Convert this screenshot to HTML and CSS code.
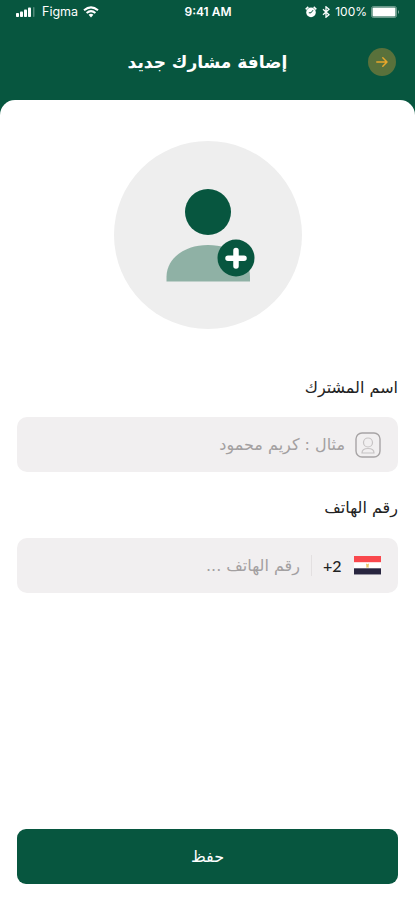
FILE: index.html
```html
<!DOCTYPE html>
<html lang="ar" dir="rtl">
<head>
<meta charset="utf-8">
<meta name="viewport" content="width=device-width">
<title>إضافة مشارك جديد</title>
<link rel="stylesheet" href="styles.css">
</head>
<body>
<div class="screen">
  <div class="status" dir="ltr">
    <div class="status-left">
      <svg width="19" height="10" viewBox="0 0 19 10" fill="#fff"><rect y="6" width="3" height="4" rx=".8"/><rect x="4" y="4.5" width="3" height="5.5" rx=".8"/><rect x="8" y="2.5" width="3" height="7.5" rx=".8"/><rect x="12" y=".5" width="3" height="9.5" rx=".8"/><rect x="17" y="0" width="1.5" height="10" rx=".7" opacity=".3"/></svg>
      <span class="carrier">Figma</span>
      <svg width="16" height="12" viewBox="0 0 16 12" fill="none" stroke="#fff" stroke-width="2"><path d="M1 4.3Q8-1.6 15 4.3"/><path d="M3.6 7Q8 3.3 12.4 7"/><path d="M5.6 8.8Q8 6.9 10.4 8.8L8 11.4Z" fill="#fff" stroke="none"/></svg>
    </div>
    <span class="time">9:41 AM</span>
    <div class="status-right">
      <svg width="12" height="12" viewBox="0 0 12 12" fill="#fff"><circle cx="6" cy="6.4" r="4.8"/><path d="M.7 3.4 3.3.9M11.3 3.4 8.7.9" stroke="#fff" stroke-width="1.5"/><path d="M6 6.8 8 4.2M6 6.8H3.8" fill="none" stroke="#07563f" stroke-width="1"/></svg>
      <svg class="bluetooth" width="8" height="12" viewBox="0 0 8 12" fill="none" stroke="#fff" stroke-width="1.3"><path d="M1 3.3 7 8.7 4 11.2V.8L7 3.3 1 8.7"/></svg>
      <span class="percent">100%</span>
      <svg width="29" height="12" viewBox="0 0 29 12"><rect x=".5" y=".5" width="25" height="11" rx="2" fill="none" stroke="#fff" stroke-opacity=".4"/><rect x="1.5" y="1.5" width="23" height="9" rx="1" fill="#fff"/><path d="M27 4q2 2 0 4z" fill="#fff" opacity=".5"/></svg>
    </div>
  </div>
  <header class="header">
    <span class="back"><svg width="28" height="28" viewBox="0 0 28 28" fill="none" stroke="#e8a72b" stroke-width="1.5" stroke-linecap="round" stroke-linejoin="round"><path d="M8.8 14H19M14.8 9.8 19 14 14.8 18.2"/></svg></span>
    <h1 class="title"><span class="fit">إضافة مشارك جديد</span></h1>
  </header>
  <main class="sheet">
    <div class="avatar">
      <svg width="188" height="188" viewBox="0 0 188 188"><circle cx="94" cy="71" r="23" fill="#07563f"/><path d="M52.5 140.5v-5C53 116 72 104 94 104s42 12 42 31.500v5z" fill="#8fb1a5"/><circle cx="122" cy="117" r="18.500" fill="#07563f"/><path d="M122 109.500v15.500M114 117.200h16" stroke="#fff" stroke-width="5.500" stroke-linecap="round"/></svg>
    </div>
    <label class="label label-name"><span class="fit">اسم المشترك</span></label>
    <div class="field">
      <svg class="user" width="26" height="26" viewBox="0 0 26 26" fill="none" stroke="#a7a4a5" stroke-width="1.4"><rect x="1" y="1" width="24" height="24" rx="6"/><g stroke="#c6c3c4" stroke-width="1.2"><circle cx="13" cy="10.500" r="4.500"/><path d="M7 21q0-4.500 6-4.500t6 4.500z"/></g></svg>
      <span class="hint hint-name"><span class="fit">مثال : كريم محمود</span></span>
    </div>
    <label class="label label-phone"><span class="fit">رقم الهاتف</span></label>
    <div class="field">
      <svg class="flag" width="27" height="19" viewBox="0 0 27 19"><path fill="#fff" d="M0 0h27v19H0z"/><path fill="#f9484d" d="M0 0h27v6.200H0z"/><path fill="#28253f" d="M0 12.300h27V18.500H0z"/><path fill="#e9c96b" d="M12 7.400 13.500 8.200 15 7.400 14.600 10.500 15 11.600H12l.4-1.100z"/></svg>
      <span class="code" dir="ltr">+2</span>
      <i class="divider"></i>
      <span class="hint hint-phone"><span class="fit">رقم الهاتف ...</span></span>
    </div>
    <button class="save"><span class="fit">حفظ</span></button>
  </main>
</div>
</body>
</html>
```
FILE: styles.css
```css
* { box-sizing: border-box; }
body { margin: 0; font-family: "DejaVu Sans", sans-serif; color: #222; background: #07563f; }
svg { display: block; flex: none; }
.screen { height: 900px; display: flex; flex-direction: column; background: #07563f; overflow: hidden; }
.status { height: 24px; padding: 0 15px 0 16px; display: grid; grid-template-columns: 1fr auto 1fr; align-items: center; color: #fff; font: 12px/24px Inter, sans-serif; }
.status-left, .status-right { display: flex; align-items: center; }
.status-right { justify-content: flex-end; }
.carrier { margin: 0 5px 0 7px; font-size: 12.5px; }
.time { font-weight: 600; }
.bluetooth { margin: 0 5px; }
.percent { margin-right: 4px; }
.header { height: 76px; display: grid; grid-template-columns: 28px 1fr 28px; padding: 0 19px; align-items: center; }
.back { width: 28px; height: 28px; border-radius: 50%; background: #59713b; }
.title { margin: 0; color: #fff; font-size: 17px; line-height: 28px; text-align: center; font-weight: 700; }
.fit { display: inline-block; white-space: nowrap; }
.sheet { flex: 1; display: flex; flex-direction: column; background: #fff; border-radius: 15px 15px 0 0; padding: 41px 17px 16px; }
.avatar { width: 188px; height: 188px; border-radius: 50%; background: #eee; margin: 0 auto; }
.label { height: 30px; line-height: 30px; font-size: 16px; }
.label-name { margin: 44px 0 14px; }
.label-phone { margin: 21px 0 15px; }
.field { height: 55px; padding: 0 17px; border-radius: 10px; background: #f1eff0; display: flex; align-items: center; }
.hint { color: #a3a0a1; font-size: 16px; line-height: 30px; }
.hint-name { margin-right: 10px; }
.code { width: 20px; margin-right: 11px; font: 500 16px Lato, sans-serif; }
.divider { width: 1px; height: 21px; background: #e3e0e1; margin: 0 11px; }
.save { margin: auto 0 0; height: 55px; border: 0; border-radius: 9px; background: #07563f; color: #fff; font: 16px "DejaVu Sans", sans-serif; }
```
